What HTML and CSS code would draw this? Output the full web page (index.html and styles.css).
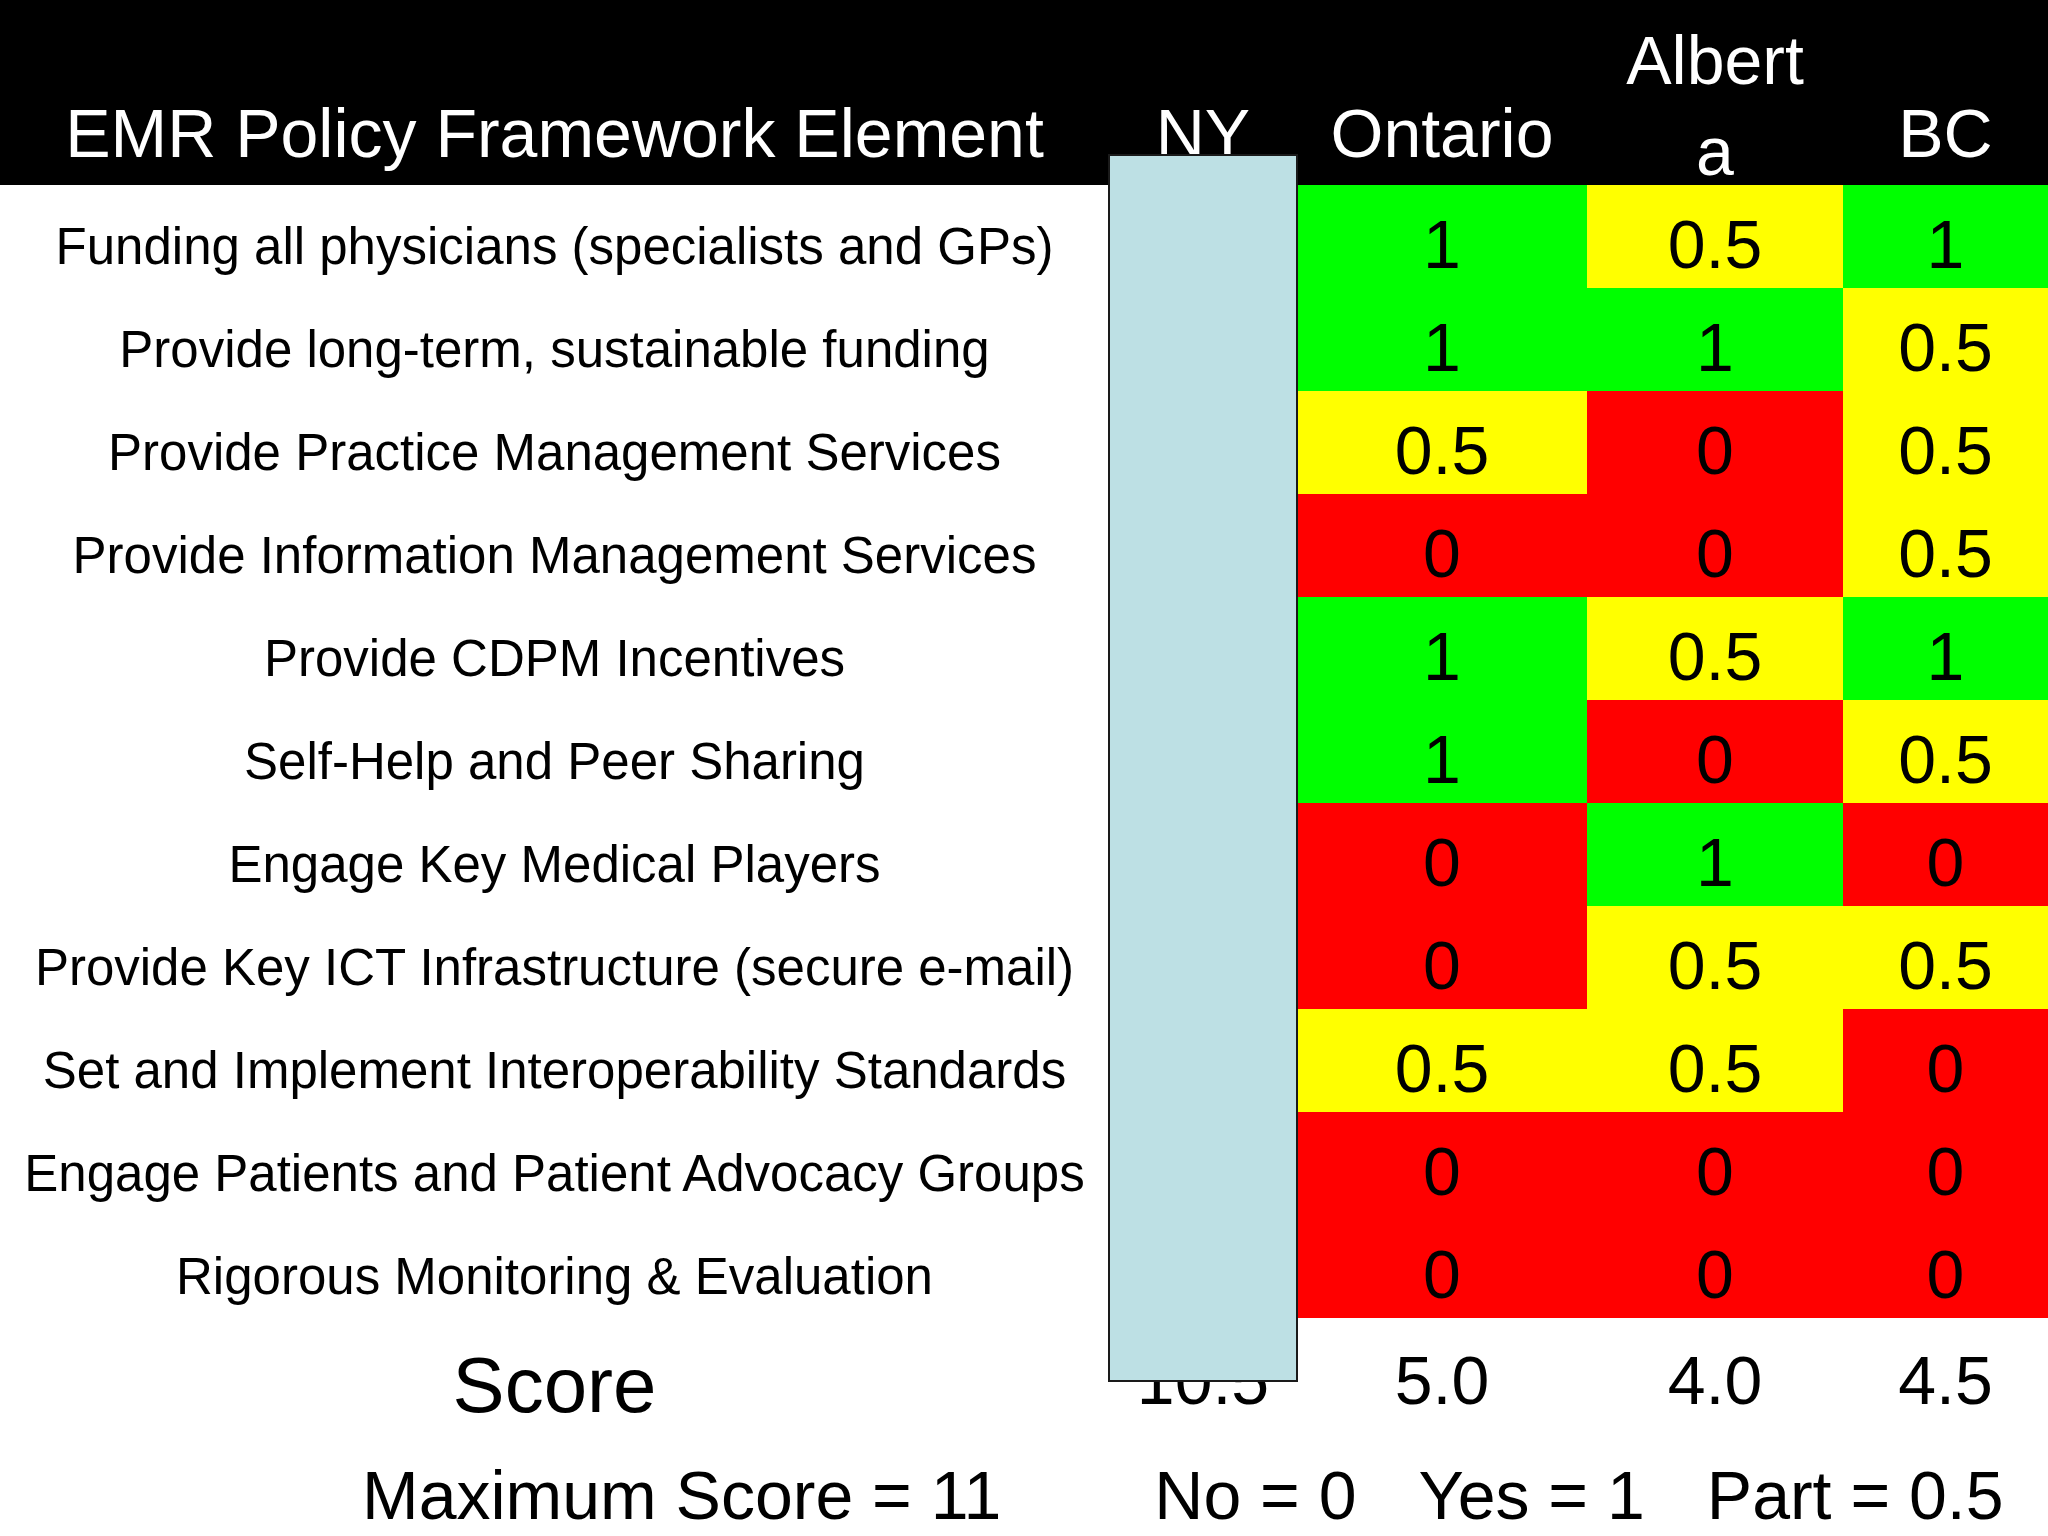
FILE: index.html
```html
<!DOCTYPE html>
<html lang="en">
<head>
<meta charset="utf-8">
<title>EMR Policy Framework Element</title>
<link rel="stylesheet" href="styles.css">
</head>
<body>
<div class="slide">
  <div class="header cols">
    <div class="hcell"><span>EMR Policy Framework Element</span></div>
    <div class="hcell"><span>NY</span></div>
    <div class="hcell"><span>Ontario</span></div>
    <div class="hcell hcell-wrap"><span>Albert<br>a</span></div>
    <div class="hcell"><span>BC</span></div>
  </div>

  <div class="body cols">
    <div class="label">Funding all physicians (specialists and GPs)</div>
    <div class="num ny"></div>
    <div class="num green">1</div>
    <div class="num yellow">0.5</div>
    <div class="num green">1</div>

    <div class="label">Provide long-term, sustainable funding</div>
    <div class="num ny"></div>
    <div class="num green">1</div>
    <div class="num green">1</div>
    <div class="num yellow">0.5</div>

    <div class="label">Provide Practice Management Services</div>
    <div class="num ny"></div>
    <div class="num yellow">0.5</div>
    <div class="num red">0</div>
    <div class="num yellow">0.5</div>

    <div class="label">Provide Information Management Services</div>
    <div class="num ny"></div>
    <div class="num red">0</div>
    <div class="num red">0</div>
    <div class="num yellow">0.5</div>

    <div class="label">Provide CDPM Incentives</div>
    <div class="num ny"></div>
    <div class="num green">1</div>
    <div class="num yellow">0.5</div>
    <div class="num green">1</div>

    <div class="label">Self-Help and Peer Sharing</div>
    <div class="num ny"></div>
    <div class="num green">1</div>
    <div class="num red">0</div>
    <div class="num yellow">0.5</div>

    <div class="label">Engage Key Medical Players</div>
    <div class="num ny"></div>
    <div class="num red">0</div>
    <div class="num green">1</div>
    <div class="num red">0</div>

    <div class="label">Provide Key ICT Infrastructure (secure e-mail)</div>
    <div class="num ny"></div>
    <div class="num red">0</div>
    <div class="num yellow">0.5</div>
    <div class="num yellow">0.5</div>

    <div class="label">Set and Implement Interoperability Standards</div>
    <div class="num ny"></div>
    <div class="num yellow">0.5</div>
    <div class="num yellow">0.5</div>
    <div class="num red">0</div>

    <div class="label">Engage Patients and Patient Advocacy Groups</div>
    <div class="num ny"></div>
    <div class="num red">0</div>
    <div class="num red">0</div>
    <div class="num red">0</div>

    <div class="label">Rigorous Monitoring &amp; Evaluation</div>
    <div class="num ny"></div>
    <div class="num red">0</div>
    <div class="num red">0</div>
    <div class="num red">0</div>
  </div>

  <div class="score cols">
    <div class="score-label">Score</div>
    <div class="score-val">10.5</div>
    <div class="score-val">5.0</div>
    <div class="score-val">4.0</div>
    <div class="score-val">4.5</div>
  </div>

  <div class="footer">
    <span class="max">Maximum Score = 11</span>
    <div class="legend">
      <span>No = 0</span>
      <span>Yes = 1</span>
      <span>Part = 0.5</span>
    </div>
  </div>

  <div class="ny-cover"></div>
</div>
</body>
</html>
```

FILE: styles.css
```css
html, body {
  margin: 0;
  padding: 0;
  background: #ffffff;
}

body {
  font-family: "Liberation Sans", Arial, sans-serif;
  color: #000000;
  overflow: hidden;
}

.slide {
  position: relative;
  width: 2048px;
  height: 1536px;
  overflow: hidden;
  background: #ffffff;
}

.cols {
  display: grid;
  grid-template-columns: 1109px 188px 290px 256px 205px;
}

/* Header */
.header {
  height: 185px;
  background: #000000;
  color: #ffffff;
  font-size: 68px;
  line-height: 91px;
}

.hcell {
  display: flex;
  flex-direction: column;
  justify-content: flex-end;
  align-items: center;
  text-align: center;
  padding-bottom: 6px;
  white-space: nowrap;
}

.hcell-wrap {
  padding-bottom: 0;
}

.hcell-wrap span {
  margin-bottom: -12px;
}

/* Body rows */
.body {
  grid-auto-rows: 103px;
}

.label,
.num {
  display: flex;
  align-items: center;
  justify-content: center;
  box-sizing: border-box;
  white-space: nowrap;
}

.label {
  font-size: 51px;
  padding-top: 20px;
}

.num {
  font-size: 68px;
  padding-top: 14px;
}

.green { background: #00ff00; }
.yellow { background: #ffff00; }
.red { background: #ff0000; }
.ny { background: #ffffff; }

/* Score row */
.score {
  height: 110px;
}

.score-label,
.score-val {
  text-align: center;
  white-space: nowrap;
}

.score-label {
  font-size: 78px;
  padding-top: 22px;
}

.score-val {
  font-size: 68px;
  padding-top: 23px;
}

/* Footer legend */
.footer {
  display: flex;
  padding-left: 362px;
  padding-top: 28px;
  font-size: 68px;
  white-space: nowrap;
}

.legend {
  display: flex;
  gap: 62px;
  margin-left: 153px;
}

/* Light blue box lying over the NY column */
.ny-cover {
  position: absolute;
  left: 1108px;
  top: 154px;
  width: 186px;
  height: 1224px;
  background: #bde0e4;
  border: 2px solid #1a1a1a;
}
```
